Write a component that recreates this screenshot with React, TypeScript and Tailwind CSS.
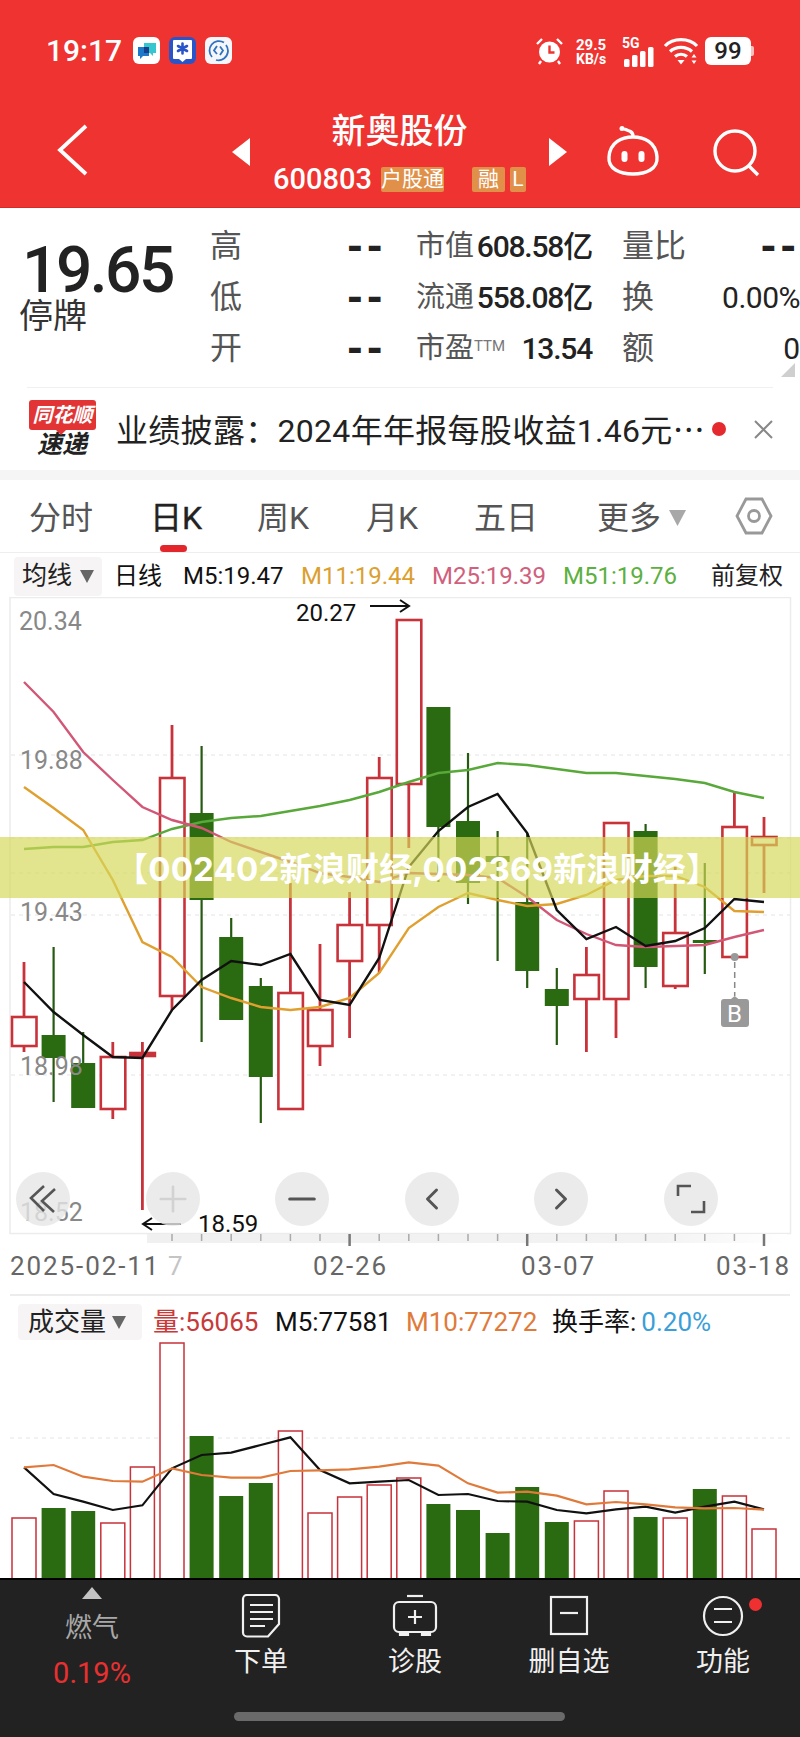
import { ChevronLeft, ChevronRight, Minus, Plus } from "lucide-react";

const RED = "#c8323a";
const GREEN = "#2a6a10";
const GREEN_WICK = "#255a10";
const xAt = (i: number) => 24 + 29.6 * i;

// [top of wick, top of body, bottom of body, bottom of wick, up?]
const candles: [number, number, number, number, boolean][] = [
  [962, 1017, 1046, 1052, true],
  [947, 1035, 1058, 1102, false],
  [1032, 1063, 1108, 1108, false],
  [1042, 1057, 1109, 1119, true],
  [1042, 1053, 1056, 1210, true],
  [725, 778, 996, 1010, true],
  [746, 813, 900, 1042, false],
  [918, 937, 1020, 1020, false],
  [978, 986, 1077, 1123, false],
  [883, 993, 1109, 1109, true],
  [944, 1010, 1046, 1066, true],
  [892, 925, 961, 1038, true],
  [757, 778, 925, 973, true],
  [620, 620, 784, 848, true],
  [707, 707, 827, 882, false],
  [753, 821, 883, 904, false],
  [831, 856, 862, 961, false],
  [833, 902, 971, 988, false],
  [968, 989, 1006, 1045, false],
  [947, 975, 999, 1052, true],
  [823, 823, 999, 1038, true],
  [824, 831, 967, 988, false],
  [867, 933, 986, 989, true],
  [863, 940, 943, 974, false],
  [792, 827, 957, 957, true],
  [817, 837, 845, 893, true],
];

const ma5 = [982, 1012, 1035, 1057, 1058, 1010, 980, 961, 965, 954, 1000, 1005, 958, 867, 831, 807, 794, 833, 910, 939, 927, 946, 941, 928, 899, 902];
const ma11 = [787, 808, 830, 880, 942, 957, 987, 998, 1007, 1010, 1007, 998, 973, 928, 907, 893, 900, 906, 904, 895, 880, 876, 876, 887, 911, 912];
const ma25 = [682, 712, 752, 780, 807, 820, 828, 842, 852, 862, 873, 877, 882, 873, 874, 875, 878, 897, 920, 934, 945, 947, 946, 945, 937, 930];
const ma51 = [849, 847, 847, 842, 840, 829, 822, 818, 816, 811, 806, 800, 792, 782, 773, 770, 763, 765, 769, 773, 773, 776, 779, 783, 792, 798];

const volTops: [number, boolean][] = [
  [1518, true], [1508, false], [1511, false], [1523, true], [1467, true], [1343, true],
  [1436, false], [1496, false], [1483, false], [1431, true], [1513, true], [1497, true],
  [1485, true], [1478, true], [1504, false], [1510, false], [1533, false], [1487, false],
  [1522, false], [1521, true], [1491, true], [1517, false], [1518, true], [1489, false],
  [1496, true], [1529, true],
];
const volM5 = [592, 672, 695, 720, 706, 595, 555, 548, 525, 502, 600, 640, 635, 630, 675, 672, 693, 695, 720, 730, 718, 710, 728, 710, 695, 718];
const volM10 = [592, 585, 620, 633, 635, 595, 615, 623, 623, 603, 601, 598, 590, 577, 587, 640, 668, 665, 677, 703, 696, 703, 712, 715, 714, 719];

const toPoints = (ys: number[]) => ys.map((y, i) => `${xAt(i)},${y}`).join(" ");

function StatusBar() {
  return (
    <div className="flex h-[100px] items-start pt-[37px] text-white">
      <div className="ml-[46px] w-[87px] text-[30px] leading-[28px] font-medium">19:17</div>
      <div className="flex gap-[9px]">
        <div className="flex h-[27px] w-[27px] items-center justify-center rounded-[6px] bg-white">
          <svg width="20" height="18" viewBox="0 0 20 18">
            <path d="M7 1h12v10h-3v3l-3-3H7z" fill="#35c6d0" />
            <path d="M1 5h11v9H6l-3 3v-3H1z" fill="#1d78c8" />
            <path d="M7 5h5v6H7z" fill="#173f8c" />
          </svg>
        </div>
        <div className="flex h-[27px] w-[27px] items-center justify-center rounded-[6px] bg-[#2a55c8]">
          <svg width="23" height="25" viewBox="0 0 23 25">
            <path d="M3 2h17a1 1 0 0 1 1 1v17a1 1 0 0 1-1 1h-5l-3.500 3-3.500-3H3a1 1 0 0 1-1-1V3a1 1 0 0 1 1-1z" fill="#fff" />
            <path d="M11.500 5.500v10M7 8l9 5M16 8l-9 5" stroke="#2a55c8" strokeWidth="2.600" strokeLinecap="round" />
          </svg>
        </div>
        <div className="flex h-[27px] w-[27px] items-center justify-center rounded-[6px] bg-[#f4f6fa]">
          <svg width="23" height="23" viewBox="0 0 23 23" fill="none" stroke="#2f72c0" strokeWidth="1.800">
            <path d="M5 18A9.500 9.500 0 0 1 17 3.500" />
            <path d="M19 6a9.500 9.500 0 0 1-2 13.500A9.500 9.500 0 0 1 9 21" />
            <path d="M10 7l-3 4.500 3 3.500M13 16l3-4.500-3-4" />
          </svg>
        </div>
      </div>
      <div className="ml-[303px] h-[27px] w-[27px]">
        <svg width="29" height="28" viewBox="0 0 29 28">
          <circle cx="14.500" cy="15" r="10.500" fill="#fff" />
          <path d="M14.500 8.500v7h5" stroke="#ef3330" strokeWidth="2.400" fill="none" />
          <path d="M2 7l5-5M27 7l-5-5M6 24l-2 3M23 24l2 3" stroke="#fff" strokeWidth="2.400" />
        </svg>
      </div>
      <div className="ml-[14px] w-[46px] pt-[1px] text-[14px] leading-[14px] font-bold">
        <div className="text-[15px]">29.5</div>
        <div>KB/s</div>
      </div>
      <div className="w-[41px]">
        <div className="text-[14px] leading-[12px] font-bold">5G</div>
        <svg className="mt-[-2px]" width="34" height="20" viewBox="0 0 34 20" fill="#fff">
          <rect x="2" y="12" width="5.500" height="8" rx="1.500" />
          <rect x="10" y="8" width="5.500" height="12" rx="1.500" />
          <rect x="18" y="4" width="5.500" height="16" rx="1.500" />
          <rect x="26" y="0" width="5.500" height="20" rx="1.500" />
        </svg>
      </div>
      <div className="w-[42px]">
        <svg width="37" height="28" viewBox="0 0 37 28" fill="none" stroke="#fff" strokeWidth="3.200">
          <path d="M2 9c8-8.500 24-8.500 32 0" />
          <path d="M7 14.500c6-5.500 16-5.500 22 0" />
          <path d="M12 19.500c3.500-3 8.500-3 12 0" />
          <path d="M14.500 23h7l-3.500 4.500z" fill="#fff" stroke="none" />
          <path d="M31 17l2.500 3.500h-5zM31 27l2.500-3.500h-5z" fill="#fff" stroke="none" />
        </svg>
      </div>
      <div className="flex h-[28px] w-[46px] items-center justify-center rounded-[6px] bg-white text-[24px] font-medium text-[#222]">99</div>
      <div className="mt-[9px] h-[10px] w-[3px] rounded-r-[2px] bg-[#f8c0bc]" />
    </div>
  );
}

function NavRow() {
  return (
    <div className="flex h-[107px] items-start text-white">
      <div className="w-[232px]">
        <svg className="mt-[24px] ml-[55px]" width="36" height="52" viewBox="0 0 36 52" fill="none" stroke="#fff" strokeWidth="3.800">
          <path d="M31 2L5 26l26 24" />
        </svg>
      </div>
      <div className="flex w-[335px] items-start">
        <svg className="mt-[38px]" width="18" height="28" viewBox="0 0 18 28">
          <path d="M18 0v28L0 14z" fill="#fff" />
        </svg>
        <div className="flex flex-1 flex-col items-center">
          <div className="pt-[13px] text-[34px] leading-[36px] font-medium">新奥股份</div>
          <div className="mt-[18px] flex h-[25px] w-[253px] items-center">
            <span className="w-[108px] text-[29px] leading-[25px] font-medium">600803</span>
            <span className="h-[25px] w-[63px] rounded-[2px] bg-[#e09048] text-center text-[21px] leading-[25px] whitespace-nowrap">户股通</span>
            <span className="ml-[28px] h-[25px] w-[33px] rounded-[2px] bg-[#e09048] text-center text-[21px] leading-[25px]">融</span>
            <span className="ml-[5px] h-[25px] w-[16px] rounded-[2px] bg-[#e09048] text-center text-[21px] leading-[25px]">L</span>
          </div>
        </div>
        <svg className="mt-[38px]" width="18" height="28" viewBox="0 0 18 28">
          <path d="M0 0v28l18-14z" fill="#fff" />
        </svg>
      </div>
      <svg className="mt-[25px] ml-[38px]" width="56" height="52" viewBox="0 0 56 52" fill="none" stroke="#fff" strokeWidth="3.400">
        <path d="M28 12C17 12 5 17 4 32c-1 12 11 17 24 17s25-5 24-17C51 17 39 12 28 12z" />
        <path d="M28 11C28 7 25 6 19 4" />
        <circle cx="17" cy="3.500" r="2.500" fill="#fff" stroke="none" />
        <rect x="16.500" y="26" width="6" height="11" rx="3" fill="#fff" stroke="none" />
        <rect x="33.500" y="26" width="6" height="11" rx="3" fill="#fff" stroke="none" />
      </svg>
      <svg className="mt-[28px] ml-[51px]" width="50" height="50" viewBox="0 0 50 50" fill="none" stroke="#fff" strokeWidth="3.400">
        <circle cx="23" cy="23" r="20" />
        <path d="M36 37l10 10" />
      </svg>
    </div>
  );
}

function Dashes() {
  return <span className="font-['DejaVu_Sans',sans-serif] text-[38px] font-bold tracking-[4px] text-[#222]">--</span>;
}

function InfoCell({ label, value }: { label: React.ReactNode; value: string }) {
  return (
    <div className="flex items-center justify-between pr-[30px]">
      <span className="text-[29px] text-[#555]">{label}</span>
      <span className="text-[30px] font-medium tracking-[-1.200px] text-[#222]">{value}</span>
    </div>
  );
}

function InfoRow(props: { a: string; c: React.ReactNode; d: string; e: React.ReactNode }) {
  return (
    <div className="grid h-[51px] grid-cols-[137px_69px_206px_178px] items-center leading-[51px]">
      <span className="text-[32px] text-[#555]">{props.a}</span>
      <Dashes />
      {props.c}
      <div className="flex items-center justify-between overflow-hidden">
        <span className="text-[32px] text-[#555]">{props.d}</span>
        {props.e}
      </div>
    </div>
  );
}

function InfoPanel() {
  return (
    <div className="relative flex h-[179px] pt-[13px]">
      <div className="w-[210px] pt-[20px]">
        <div className="pl-[22px] text-[64px] leading-[60px] font-medium tracking-[-2.500px] text-[#222]">19.65</div>
        <div className="pl-[19px] text-[34px] leading-[30px] text-[#333]">停牌</div>
      </div>
      <div>
        <InfoRow a="高" c={<InfoCell label="市值" value="608.58亿" />} d="量比" e={<Dashes />} />
        <InfoRow
          a="低"
          c={<InfoCell label="流通" value="558.08亿" />}
          d="换"
          e={<span className="text-[30px] tracking-[-0.5px] text-[#222]">0.00%</span>}
        />
        <InfoRow
          a="开"
          c={
            <InfoCell
              label={
                <>
                  市盈<sup className="text-[15px] text-[#777]">TTM</sup>
                </>
              }
              value="13.54"
            />
          }
          d="额"
          e={<span className="text-[30px] text-[#222]">0</span>}
        />
      </div>
      <svg className="absolute top-[155px] right-[5px]" width="14" height="14" viewBox="0 0 14 14">
        <path d="M14 0v14H0z" fill="#cfcfcf" />
      </svg>
    </div>
  );
}

function NewsRow() {
  return (
    <div className="mx-[27px] flex h-[83px] items-center border-t border-[#f0f0f0]">
      <div className="ml-[2px] flex w-[87px] flex-col">
        <div className="relative h-[30px] w-[67px] rounded-[3px] bg-[#e23434] text-center text-[20px] leading-[30px] font-bold whitespace-nowrap text-white italic">
          同花顺
          <div className="absolute top-[30px] left-[27px] h-0 w-0 border-t-[5px] border-r-[5px] border-l-[5px] border-t-[#e23434] border-r-transparent border-l-transparent" />
        </div>
        <div className="mt-[1px] pl-[8px] text-[25px] leading-[27px] font-bold text-[#222] italic">速递</div>
      </div>
      <div className="w-[596px] text-[32px] tracking-[0.300px] whitespace-nowrap text-[#222]">
        业绩披露：2024年年报每股收益1.46元<span className="font-['Noto_Sans_CJK_SC',sans-serif]">…</span>
      </div>
      <div className="h-[14px] w-[14px] rounded-full bg-[#e42a2e]" />
      <svg className="ml-[28px]" width="19" height="19" viewBox="0 0 19 19" stroke="#888" strokeWidth="2">
        <path d="M1 1l17 17M18 1L1 18" />
      </svg>
    </div>
  );
}

function TabsRow() {
  return (
    <div className="relative flex h-[73px] items-center border-b border-[#eeeeee] pt-[3px] pl-[29px] text-[32px] text-[#555]">
      <div className="w-[121px]">分时</div>
      <div className="w-[107px] text-[#222]" style={{ WebkitTextStroke: "0.4px #222" }}>日K</div>
      <div className="w-[109px]">周K</div>
      <div className="w-[108px]">月K</div>
      <div className="w-[123px]">五日</div>
      <div className="flex w-[138px] items-center">
        更多
        <svg className="ml-[8px]" width="17" height="16" viewBox="0 0 17 16">
          <path d="M0 0h17L8.500 16z" fill="#a8a8a8" />
        </svg>
      </div>
      <svg className="mt-[-4px]" width="38" height="38" viewBox="0 0 38 38" fill="none" stroke="#999" strokeWidth="2.800">
        <path d="M11 2h16l9 17-9 17H11L2 19z" />
        <circle cx="19" cy="19" r="5.500" />
      </svg>
      <div className="absolute bottom-[0px] left-[160px] h-[7px] w-[27px] rounded-full bg-[#e2262c]" />
    </div>
  );
}

function MaRow() {
  return (
    <div className="flex h-[44px] items-center pt-[2px] pl-[14px] text-[24px] whitespace-nowrap">
      <div className="flex h-[39px] w-[88px] items-center rounded-[4px] bg-[#f6f4f4] pl-[8px] text-[25px] text-[#222]">
        均线
        <svg className="ml-[8px]" width="14" height="14" viewBox="0 0 14 14">
          <path d="M0 1h14L7 14z" fill="#666" />
        </svg>
      </div>
      <div className="ml-[12px] w-[69px] text-[#111]">日线</div>
      <div className="w-[118px] text-[#111]">M5:19.47</div>
      <div className="w-[131px] text-[#dba030]">M11:19.44</div>
      <div className="w-[131px] text-[#d0607c]">M25:19.39</div>
      <div className="w-[148px] text-[#5cb040]">M51:19.76</div>
      <div className="text-[#222]">前复权</div>
    </div>
  );
}

function KChart() {
  const ticks = candles.map((_, i) => i).filter((i) => i >= 5);
  return (
    <svg className="block" width="800" height="697" viewBox="0 597 800 697">
      <defs>
        <linearGradient id="scrollShade" x1="0" x2="1" y1="0" y2="0">
          <stop offset="0" stopColor="#f0f0f0" />
          <stop offset="0.8" stopColor="#f3f3f3" />
          <stop offset="1" stopColor="#ffffff" />
        </linearGradient>
      </defs>
      <rect x="10" y="597.500" width="780.500" height="636" fill="none" stroke="#ececec" strokeWidth="1.500" />
      <rect x="147" y="1234" width="640" height="9" fill="url(#scrollShade)" />
      {[755, 838, 873, 915, 1075].map((y) => (
        <line key={y} x1="11" x2="790" y1={y} y2={y} stroke="#e4e4e4" strokeDasharray="4 4" />
      ))}
      {candles.map(([high, top, bottom, low, up], i) => {
        const x = xAt(i);
        if (up) {
          return (
            <g key={i} stroke={RED}>
              <line x1={x} x2={x} y1={high} y2={top} strokeWidth="2.800" />
              <line x1={x} x2={x} y1={bottom} y2={low} strokeWidth="2.800" />
              <rect x={x - 12} y={top} width="24.500" height={bottom - top} fill={bottom - top < 6 ? RED : "#fff"} strokeWidth="2.600" />
            </g>
          );
        }
        return (
          <g key={i}>
            <line x1={x} x2={x} y1={high} y2={low} stroke={GREEN_WICK} strokeWidth="2.200" />
            <rect x={x - 12} y={top} width="24" height={bottom - top} fill={GREEN} />
          </g>
        );
      })}
      <polyline points={toPoints(ma51)} fill="none" stroke="#58a83a" strokeWidth="2.400" />
      <polyline points={toPoints(ma25)} fill="none" stroke="#d25676" strokeWidth="2.400" />
      <polyline points={toPoints(ma11)} fill="none" stroke="#e0a030" strokeWidth="2.400" />
      <polyline points={toPoints(ma5)} fill="none" stroke="#111" strokeWidth="2.400" />
      <g fontSize="25" fill="#888">
        <text x="19" y="630">20.34</text>
        <text x="20" y="769">19.88</text>
        <text x="20" y="921">19.43</text>
        <text x="20" y="1075">18.98</text>
        <text x="20" y="1221">18.52</text>
      </g>
      <g fontSize="24" fill="#111">
        <text x="296" y="621">20.27</text>
        <text x="198" y="1232">18.59</text>
      </g>
      <path d="M370 606h39M400 600l9 6-9 6" fill="none" stroke="#111" strokeWidth="2" />
      <path d="M181 1224h-38M152 1218l-9 6 9 6" fill="none" stroke="#111" strokeWidth="2" />
      <circle cx="734.700" cy="957" r="4" fill="#999" />
      <line x1="734.700" x2="734.700" y1="962" y2="996" stroke="#888" strokeWidth="1.500" strokeDasharray="6 4" />
      <path d="M721 1002a3 3 0 0 1 3-3h7l3.700-3 3.700 3h7.600a3 3 0 0 1 3 3v22a3 3 0 0 1-3 3h-22a3 3 0 0 1-3-3z" fill="#999" />
      <text x="734.500" y="1022" fontSize="24" fill="#fff" textAnchor="middle">B</text>
      {ticks.map((i) => (
        <line
          key={i}
          x1={xAt(i)}
          x2={xAt(i)}
          y1="1234"
          y2={i === 11 || i === 17 || i === 25 ? 1246 : 1241}
          stroke={i === 11 || i === 17 || i === 25 ? "#777" : "#aaa"}
          strokeWidth={i === 11 || i === 17 || i === 25 ? 2.500 : 1.500}
        />
      ))}
      <g fontSize="26" fill="#666" letterSpacing="1.900">
        <text x="10" y="1275">2025-02-11</text>
        <text x="168" y="1275" fill="#c4c4c4">7</text>
        <text x="313" y="1275">02-26</text>
        <text x="521" y="1275">03-07</text>
        <text x="716" y="1275">03-18</text>
      </g>
    </svg>
  );
}

function ChartControls() {
  const btn = "flex h-[54px] w-[54px] items-center justify-center rounded-full bg-[#e6e6e6]/80";
  return (
    <div className="absolute top-[575px] left-[16px] flex gap-[75.600px] text-[#555]">
      <div className={btn}>
        <svg width="30" height="30" viewBox="0 0 30 30" fill="none" stroke="#555" strokeWidth="2.600">
          <path d="M16 2L3 14l13 13M27 5L14 17l12 11" />
        </svg>
      </div>
      <div className={btn}>
        <Plus size={42} strokeWidth={1.500} className="text-[#d2d2d2]" />
      </div>
      <div className={btn}>
        <Minus size={42} strokeWidth={1.800} />
      </div>
      <div className={btn}>
        <ChevronLeft size={36} strokeWidth={2} />
      </div>
      <div className={btn}>
        <ChevronRight size={36} strokeWidth={2} />
      </div>
      <div className={btn}>
        <svg width="30" height="30" viewBox="0 0 30 30" fill="none" stroke="#555" strokeWidth="2.600">
          <path d="M2 12V2h13M28 17v11H15" />
        </svg>
      </div>
    </div>
  );
}

function VolumePanel() {
  return (
    <div className="mx-[10px] h-[284px] border-t-2 border-[#ececec]">
      <div className="flex h-[44px] items-center pt-[8px] pl-[8px] text-[26px] whitespace-nowrap">
        <div className="flex h-[36px] w-[124px] items-center rounded-[4px] bg-[#f6f4f4] pl-[10px] text-[#222]">
          成交量
          <svg className="ml-[6px]" width="14" height="14" viewBox="0 0 14 14">
            <path d="M0 1h14L7 14z" fill="#666" />
          </svg>
        </div>
        <div className="ml-[11px] w-[122px] text-[#c83a3a]">量:56065</div>
        <div className="w-[131px] text-[#111]">M5:77581</div>
        <div className="w-[146px] text-[#e07a3a]">M10:77272</div>
        <div className="text-[#111]">
          换手率:<span className="ml-[5px] text-[#3a9ed8]">0.20%</span>
        </div>
      </div>
      <svg className="ml-[-10px] block" width="800" height="238" viewBox="0 1340 800 238">
        <line x1="10" x2="790" y1="1438" y2="1438" stroke="#e4e4e4" strokeDasharray="4 4" />
        {volTops.map(([top, up], i) =>
          up ? (
            <rect key={i} x={xAt(i) - 12} y={top} width="24" height={1580 - top} fill="#fff" stroke={RED} strokeWidth="1.500" />
          ) : (
            <rect key={i} x={xAt(i) - 12} y={top} width="24" height={1580 - top} fill={GREEN} />
          ),
        )}
        <polyline points={volM5.map((y, i) => `${xAt(i)},${1270 + y / 3}`).join(" ")} fill="none" stroke="#111" strokeWidth="2.200" />
        <polyline points={volM10.map((y, i) => `${xAt(i)},${1270 + y / 3}`).join(" ")} fill="none" stroke="#e07a3a" strokeWidth="2.200" />
      </svg>
    </div>
  );
}

function BottomBar() {
  const item = "flex w-[154px] flex-col items-center pt-[14px] text-[27px] leading-[40px] text-[#f0f0f0]";
  return (
    <div className="relative h-[159px] border-t-2 border-black bg-[#222222]">
      <div className="flex">
        <div className="flex w-[184px] flex-col items-center pt-[7px]">
          <svg width="20" height="12" viewBox="0 0 20 12">
            <path d="M10 0l10 12H0z" fill="#c4c4c4" />
          </svg>
          <div className="mt-[13px] text-[27px] leading-[32px] text-[#a8a8a8]">燃气</div>
          <div className="mt-[13px] text-[29px] leading-[32px] text-[#e83030]">0.19%</div>
        </div>
        <div className={item}>
          <svg width="40" height="44" viewBox="0 0 40 44" fill="none" stroke="#f0f0f0" strokeWidth="2.200">
            <path d="M6 1h28a4 4 0 0 1 4 4v25L27 42.500H6a4 4 0 0 1-4-4V5a4 4 0 0 1 4-4z" />
            <path d="M9 11h23M9 18h23M9 25h23M9 32h15" />
          </svg>
          <div className="mt-[4px]">下单</div>
        </div>
        <div className={item}>
          <svg width="46" height="44" viewBox="0 0 46 44" fill="none" stroke="#f0f0f0" strokeWidth="2.200">
            <path d="M15 2h16" />
            <rect x="2" y="8" width="42" height="30" rx="5" />
            <path d="M23 16v14M16 23h14" />
            <path d="M8 38h8v3H8zM30 38h8v3h-8z" fill="#f0f0f0" />
          </svg>
          <div className="mt-[4px]">诊股</div>
        </div>
        <div className={item}>
          <svg width="40" height="44" viewBox="0 0 40 44" fill="none" stroke="#f0f0f0" strokeWidth="2.200">
            <rect x="2" y="3" width="36" height="37" />
            <path d="M11 19h18" />
          </svg>
          <div className="mt-[4px]">删自选</div>
        </div>
        <div className={`${item} relative`}>
          <svg width="42" height="44" viewBox="0 0 42 44" fill="none" stroke="#f0f0f0" strokeWidth="2.200">
            <circle cx="21" cy="22" r="19" />
            <path d="M12 15h18M12 28h18" />
          </svg>
          <div className="mt-[4px]">功能</div>
          <div className="absolute top-[18px] right-[38px] h-[13px] w-[13px] rounded-full bg-[#ee3030]" />
        </div>
      </div>
      <div className="absolute top-[132px] left-[234px] h-[9px] w-[331px] rounded-full bg-[#6a6a6a]" />
    </div>
  );
}

export default function App() {
  return (
    <div className="relative h-[1737px] w-[800px] overflow-hidden bg-white font-['Roboto','Noto_Sans_CJK_SC',sans-serif]">
      <div className="h-[208px] border-b border-[#d42a28] bg-[#ef3330]">
        <StatusBar />
        <NavRow />
      </div>
      <InfoPanel />
      <NewsRow />
      <div className="h-[10px] bg-[#f5f5f5]" />
      <TabsRow />
      <MaRow />
      <div className="relative">
        <KChart />
        <ChartControls />
        <div className="absolute top-[240px] left-0 h-[61px] w-full bg-[#d4d759]/[0.68] pl-[115px] font-['Inter','Noto_Sans_CJK_SC',sans-serif] text-[33px] leading-[65px] font-bold tracking-[0.200px] whitespace-nowrap text-white">
          【002402新浪财经,002369新浪财经】
        </div>
      </div>
      <VolumePanel />
      <BottomBar />
    </div>
  );
}
